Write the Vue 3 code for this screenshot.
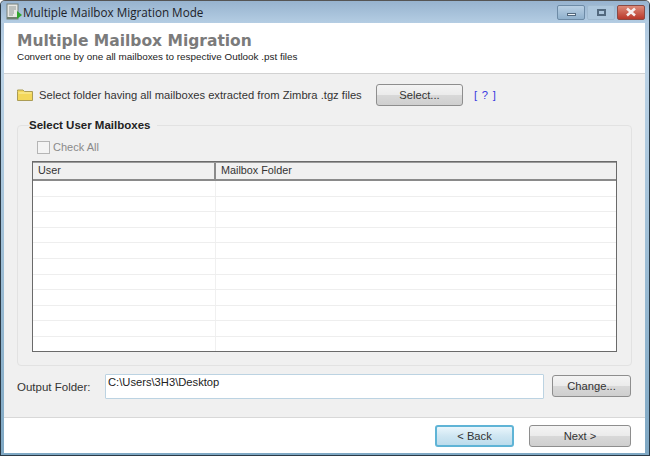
<script setup>
const rows = Array.from({ length: 11 }, (_, i) => i);
</script>

<template>
  <div class="window">
    <div class="titlebar">
      <svg class="app-icon" width="18" height="18" viewBox="0 0 18 18">
        <rect x="2" y="1" width="11" height="15" fill="#e8e8e4" stroke="#77807a" />
        <path d="M4 4h7M4 6h7M4 8h5M4 10h5M4 12h4" stroke="#8d9694" />
        <rect x="2" y="14" width="10" height="2" fill="#6f7f70" />
        <path d="M12 8l5 4-5 4z" fill="#2fa52c" />
      </svg>
      <span class="title">Multiple Mailbox Migration Mode</span>
      <div class="win-buttons">
        <div class="win-btn"><span class="min-glyph"></span></div>
        <div class="win-btn plain"><span class="max-glyph"></span></div>
        <div class="win-btn close">
          <svg width="14" height="10" viewBox="0 0 14 10">
            <path d="M3 1.500l8 7M11 1.500l-8 7" stroke="#f6eeee" stroke-width="2.600" />
          </svg>
        </div>
      </div>
    </div>

    <div class="client">
      <div class="header">
        <h1>Multiple Mailbox Migration</h1>
        <p>Convert one by one all mailboxes to respective Outlook .pst files</p>
      </div>

      <div class="content">
        <div class="select-row">
          <svg class="folder" width="16" height="12" viewBox="0 0 16 12">
            <path d="M.5 2.500V1h5.500l1.500 1.500h8v9H.500z" fill="#f3d75a" stroke="#ab9c55" />
            <path d="M1.500 4h13" stroke="#fbf0a8" />
          </svg>
          <span class="select-label">Select folder having all mailboxes extracted from Zimbra .tgz files</span>
          <button class="btn select-btn">Select...</button>
          <a class="help">[ ? ]</a>
        </div>

        <fieldset class="group">
          <legend>Select User Mailboxes</legend>
          <label class="check-all">
            <span class="box"></span>
            Check All
          </label>
          <div class="list">
            <div class="list-head">
              <div class="col-user">User</div>
              <div class="col-folder">Mailbox Folder</div>
            </div>
            <div v-for="r in rows" :key="r" class="list-row">
              <div class="col-user"></div>
              <div class="col-folder"></div>
            </div>
          </div>
        </fieldset>

        <div class="output-row">
          <span class="output-label">Output Folder:</span>
          <div class="output-input">C:\Users\3H3\Desktop</div>
          <button class="btn change-btn">Change...</button>
        </div>
      </div>

      <div class="footer">
        <button class="btn nav-btn back">&lt; Back</button>
        <button class="btn nav-btn">Next &gt;</button>
      </div>
    </div>
  </div>
</template>

<style>
html, body {
  margin: 0;
  background: #fff;
}
</style>

<style scoped>
.window {
  width: 650px;
  height: 456px;
  box-sizing: border-box;
  display: flex;
  flex-direction: column;
  padding: 0 4px 2px 3px;
  background: linear-gradient(#a9c3dc, #bcd3e6 60px, #7fa8c4);
  border: 1px solid #2b3a46;
  border-top-color: #555;
  border-radius: 5px 5px 0 0;
  font-family: "Liberation Sans", Arial, sans-serif;
  font-size: 11.200px;
  color: #333;
  overflow: hidden;
}
.titlebar {
  height: 22px;
  flex: none;
  display: flex;
  align-items: center;
  margin: 0 -4px 0 -3px;
  padding: 0 4px;
  background: linear-gradient(#97b3cf, #b4cde3);
}
.title {
  font-family: "Open Sans", sans-serif;
  font-size: 11.700px;
  color: #1d2228;
}
.win-buttons {
  margin-left: auto;
  display: flex;
  gap: 2px;
}
.win-btn {
  width: 28px;
  height: 15px;
  box-sizing: border-box;
  display: flex;
  align-items: center;
  justify-content: center;
  border: 1px solid #6d8ba6;
  border-radius: 2px;
  background: linear-gradient(#b9d0e4, #8fb0cc);
}
.win-btn.plain {
  border-color: #a0bad0;
  background: #adc7dd;
}
.win-btn.close {
  border-color: #8a4a44;
  background: linear-gradient(#dd8a78, #b9382a);
}
.min-glyph {
  width: 9px;
  height: 3px;
  margin-top: 4px;
  background: #eef3f7;
  border: 1px solid #52697e;
  box-sizing: border-box;
}
.max-glyph {
  width: 9px;
  height: 7px;
  box-sizing: border-box;
  border: 2px solid #52697e;
}
.client {
  flex: 1;
  display: flex;
  flex-direction: column;
  background: #f0f0f0;
  min-height: 0;
}
.header {
  height: 51px;
  flex: none;
  box-sizing: border-box;
  padding: 9px 0 0 13px;
  background: #fff;
  border-bottom: 1px solid #d2d2d2;
}
.header h1 {
  margin: 0;
  font-family: "DejaVu Sans", sans-serif;
  font-size: 15.500px;
  line-height: 18px;
  font-weight: 700;
  color: #7b7b7b;
}
.header p {
  margin: 0;
  font-size: 9.900px;
  line-height: 13px;
  color: #222;
}
.content {
  flex: 1;
  min-height: 0;
  display: flex;
  flex-direction: column;
  padding: 0 13px;
}
.select-row {
  display: flex;
  align-items: center;
  height: 42px;
}
.folder {
  margin-right: 6px;
  flex: none;
}
.select-label {
  width: 337px;
  white-space: nowrap;
}
.help {
  margin-left: 11px;
  color: #3a3ae0;
  letter-spacing: 0.800px;
}
.btn {
  box-sizing: border-box;
  padding: 0;
  font: inherit;
  color: #333;
  border: 1px solid #8e8e8e;
  border-radius: 3px;
  background: linear-gradient(#f4f4f4 0%, #ebebeb 48%, #d8d8d8 52%, #cfcfcf 100%);
}
.select-btn {
  width: 87px;
  height: 22px;
}
.group {
  margin: 3px 0 0;
  padding: 0 14px;
  height: 247px;
  box-sizing: border-box;
  border: 1px solid #e2e2e2;
  border-radius: 4px;
}
.group legend {
  padding: 0 7px 0 0;
  margin-left: -3px;
  font-size: 11.500px;
  font-weight: 700;
  color: #222;
}
.check-all {
  display: flex;
  align-items: center;
  height: 20px;
  margin: 6px 0 4px 5px;
  font-size: 11px;
  color: #8a8a8a;
}
.box {
  width: 11px;
  height: 11px;
  margin-right: 3px;
  border: 1px solid #b5b5b5;
  background: #f4f4f4;
}
.list {
  height: 191px;
  box-sizing: border-box;
  border: 1px solid #6a6a6a;
  background: #fff;
  overflow: hidden;
}
.list-head {
  display: flex;
  height: 16px;
  line-height: 15px;
  font-size: 10.800px;
  border-top: 1px solid #9a9a9a;
  border-bottom: 2px solid #8a8a8a;
  background: #f0f0f0;
}
.list-head .col-user {
  border-right: 2px solid #8a8a8a;
}
.list-head .col-user,
.list-head .col-folder {
  padding-left: 5px;
}
.list-row {
  display: flex;
  height: 15.600px;
  box-sizing: border-box;
  border-bottom: 1px solid #eeeeee;
}
.col-user {
  width: 183px;
  box-sizing: border-box;
  border-right: 1px solid #f0f0f0;
  flex: none;
}
.col-folder {
  flex: 1;
}
.output-row {
  display: flex;
  align-items: flex-start;
  padding-top: 8px;
}
.output-label {
  margin-top: 7px;
  width: 88px;
  flex: none;
  font-size: 11.500px;
}
.output-input {
  width: 439px;
  height: 25px;
  box-sizing: border-box;
  padding: 1px 2px;
  background: #fff;
  border: 1px solid #bcd3e2;
  border-radius: 1px;
  color: #222;
}
.change-btn {
  width: 79px;
  height: 22px;
  margin-left: 8px;
  margin-top: 1px;
}
.footer {
  height: 36px;
  flex: none;
  display: flex;
  justify-content: flex-end;
  align-items: flex-start;
  gap: 15px;
  padding: 7px 14px 0 0;
  box-sizing: border-box;
  background: #fff;
  border-top: 1px solid #d8d8d8;
}
.nav-btn {
  height: 22px;
  width: 102px;
}
.nav-btn.back {
  width: 79px;
  border: 2px solid #5fb4d6;
  background: linear-gradient(#eaf6fc, #cfe6f2 50%, #bcdcec);
}
</style>
